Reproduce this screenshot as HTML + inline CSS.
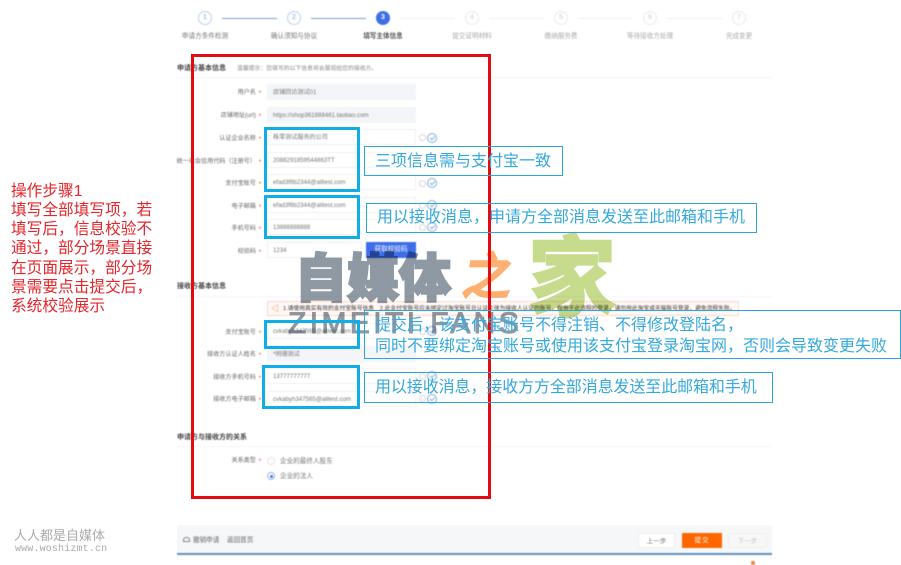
<!DOCTYPE html>
<html lang="zh">
<head>
<meta charset="utf-8">
<title>填写主体信息</title>
<style>
html,body{margin:0;padding:0;background:#fff}
body{position:relative;width:901px;height:564px;overflow:hidden;font-family:"Liberation Sans","Noto Sans CJK SC",sans-serif}
div,span{position:absolute;box-sizing:border-box;white-space:nowrap}
#page{left:0;top:0;width:901px;height:564px;filter:blur(.45px);font-size:6.6px;color:#666}
.c{width:14px;height:14px;border-radius:50%;border:1.3px solid #bcd0f0;top:11px;color:#7f9fdc;text-align:center;line-height:11px;font-size:7px;background:#fff}
.c.off{border-color:#eaeaea;color:#ccc}
.c.on{background:#3f6fe8;border-color:#3f6fe8;color:#fff;font-weight:bold}
.ln{top:18px;height:1px;width:55px;background:#7d9ccc}
.ln.off{background:#efefef}
.st{top:32px;width:80px;text-align:center;color:#777;line-height:9px}
.st.off{color:#aaa}
.st.on{font-weight:bold;color:#555}
.h{left:177px;font-weight:bold;color:#444;line-height:10px;font-size:7px}
.hr{left:177px;width:595px;height:1px;background:#f5f5f5}
.lb{right:640px;color:#666;line-height:9px;font-size:6.1px}
.lb i{font-style:normal;color:#f0603c;margin-left:3px}
.in{left:267px;width:149px;height:16px;border:1px solid #f0f0f0;color:#777;line-height:15px;padding-left:5px;font-size:6.1px;background:#fff}
.in.ro{background:#f3f5f9;border-color:#f3f5f9}
.g{left:419px;width:7px;height:7px;border:1px solid #d8d8d8;border-radius:50%}
.k{left:427px;width:10px;height:10px;border:1px solid #86aedb;border-radius:50%}
.k:after{content:"";position:absolute;left:2px;top:1.5px;width:4px;height:2px;border-left:1px solid #86aedb;border-bottom:1px solid #86aedb;transform:rotate(-45deg)}
.btn{top:533px;height:15px;text-align:center;line-height:15px;font-size:6.5px}
.blue{border:3px solid #10aee6}
.note{border:1px solid #2ba6dc;color:#35a8dc;font-size:16px;line-height:21px;font-weight:400}
.red{left:11px;color:#e4252b;font-size:15.7px;line-height:19.2px}
</style>
</head>
<body>
<div id="page">
  <div class="c" style="left:198px">1</div><div class="ln" style="left:222px"></div>
  <div class="c" style="left:287px">2</div><div class="ln" style="left:311px"></div>
  <div class="c on" style="left:376px">3</div><div class="ln off" style="left:400px"></div>
  <div class="c off" style="left:465px">4</div><div class="ln off" style="left:489px"></div>
  <div class="c off" style="left:554px">5</div><div class="ln off" style="left:578px"></div>
  <div class="c off" style="left:643px">6</div><div class="ln off" style="left:667px"></div>
  <div class="c off" style="left:732px">7</div>
  <div class="st" style="left:165px">申请方条件检测</div>
  <div class="st" style="left:254px">确认须知与协议</div>
  <div class="st on" style="left:343px">填写主体信息</div>
  <div class="st off" style="left:432px">提交证明材料</div>
  <div class="st off" style="left:521px">缴纳服务费</div>
  <div class="st off" style="left:610px">等待接收方处理</div>
  <div class="st off" style="left:699px">完成变更</div>

  <div class="h" style="top:64px">申请方基本信息</div>
  <div style="left:237px;top:65px;color:#888;line-height:9px;font-size:5.85px">温馨提示：您填写的以下信息将会展现给您的接收方。</div>
  <div class="hr" style="top:77px"></div>

  <div class="lb" style="top:88px">用户名<i>•</i></div><div class="in ro" style="top:84px">店铺回访测试01</div>
  <div class="lb" style="top:111px">店铺地址(url)<i>•</i></div><div class="in ro" style="top:107px">https://shop361888461.taobao.com</div>
  <div class="lb" style="top:134px">认证企业名称<i>•</i></div><div class="in" style="top:129px">株零测试服务的公司</div>
  <div class="lb" style="top:157px">统一社会信用代码（注册号）<i>•</i></div><div class="in" style="top:152px">2088291859544863TT</div>
  <div class="lb" style="top:179px">支付宝账号<i>•</i></div><div class="in" style="top:174px">efad3f6b2344@alitest.com</div>
  <div class="lb" style="top:202px">电子邮箱<i>•</i></div><div class="in" style="top:197px">efad3f6b2344@alitest.com</div>
  <div class="lb" style="top:224px">手机号码<i>•</i></div><div class="in" style="top:219px">13888888888</div>
  <div class="lb" style="top:247px">校验码<i>•</i></div><div class="in" style="top:242px;width:95px">1234</div>
  <div style="left:366px;top:242px;width:50px;height:16px;background:#3f6fe8;color:#fff;text-align:center;line-height:16px">获取校验码</div>

  <div class="g" style="top:134px"></div><div class="k" style="top:133px"></div>
  <div class="g" style="top:180px"></div><div class="k" style="top:178px"></div>
  <div class="g" style="top:202px"></div><div class="k" style="top:200px"></div>
  <div class="g" style="top:224px"></div><div class="k" style="top:222px"></div>

  <div class="h" style="top:282px">接收方基本信息</div>
  <div class="hr" style="top:296px"></div>
  <div style="left:267px;top:301px;width:472px;height:15px;background:#fff8f5;border:1px solid #f8d8cc;color:#333;line-height:14px;padding-left:15px;font-size:5.75px">1.请使用真实有效的支付宝账号信息　2.此支付宝账号应未绑定过淘宝账号且认证主体为接收人认证的账号，仅用于此流程的登录，请勿用此淘宝或天猫账号登录，避免流程失败。</div>
  <div style="left:271px;top:304px;color:#ee6a3a;font-size:8px;line-height:9px">◁</div>

  <div class="lb" style="top:328px">支付宝账号<i>•</i></div><div class="in" style="top:323px">cvkabyh347565@alitest.com</div>
  <div class="lb" style="top:350px">接收方认证人姓名<i>•</i></div><div class="in ro" style="top:346px">*明珊测试</div>
  <div class="lb" style="top:373px">接收方手机号码<i>•</i></div><div class="in" style="top:368px">13777777777</div>
  <div class="lb" style="top:395px">接收方电子邮箱<i>•</i></div><div class="in" style="top:391px">cvkabyh347565@alitest.com</div>
  <div class="g" style="top:328px"></div><div class="k" style="top:326px"></div>
  <div class="g" style="top:373px"></div><div class="k" style="top:371px"></div>
  <div class="g" style="top:395px"></div><div class="k" style="top:394px"></div>

  <div class="h" style="top:433px">申请方与接收方的关系</div>
  <div class="hr" style="top:446px"></div>
  <div class="lb" style="top:456px">关系类型<i>•</i></div>
  <div style="left:267px;top:457px;width:8px;height:8px;border:1px solid #e4e4e4;border-radius:50%"></div>
  <div style="left:280px;top:457px;line-height:9px;color:#777">企业的最终人股东</div>
  <div style="left:267px;top:472px;width:8px;height:8px;border:1px solid #9db4e8;border-radius:50%"></div>
  <div style="left:269.5px;top:474.5px;width:3px;height:3px;background:#3f6fe8;border-radius:50%"></div>
  <div style="left:280px;top:472px;line-height:9px;color:#777">企业的法人</div>

  <div style="left:177px;top:525px;width:595px;height:30px;background:#f6f7f8;border-bottom:2px solid #5d90bb"></div>
  <div style="left:183px;top:537px;width:7px;height:5px;border:1px solid #888;border-radius:3px 3px 0 0"></div>
  <div style="left:193px;top:536px;line-height:9px;color:#666">撤销申请</div>
  <div style="left:227px;top:536px;line-height:9px;color:#666">返回首页</div>
  <div class="btn" style="left:638px;width:37px;background:#fff;color:#777;border:1px solid #eee">上一步</div>
  <div class="btn" style="left:682px;width:40px;background:#ff6600;color:#fff;letter-spacing:1px">提交</div>
  <div class="btn" style="left:728px;width:39px;background:#f7f7f7;color:#ccc;border:1px solid #eee">下一步</div>
  <div style="left:751px;top:561px;width:4px;height:4px;background:#f0803c;border-radius:50%"></div>
</div>

<div style="left:295px;top:238px;font:900 52px/74px 'Noto Sans CJK SC',sans-serif;color:#8f99a3;-webkit-text-stroke:2.4px #8f99a3;mix-blend-mode:multiply">自媒体</div>
<div style="left:464px;top:236px;font:700 50px/74px 'Noto Sans CJK SC',sans-serif;color:#ffb071;-webkit-text-stroke:1px #ffb071;mix-blend-mode:multiply;transform:skewX(-10deg)">之</div>
<div style="left:528px;top:216px;font:700 88px/112px 'Noto Sans CJK SC',sans-serif;color:#c6dc8c;-webkit-text-stroke:2.5px #c6dc8c;mix-blend-mode:multiply">家</div>
<div style="left:288px;top:306px;font:400 30px/36px 'Liberation Sans',sans-serif;color:#8f99a3;-webkit-text-stroke:1px #8f99a3;letter-spacing:3.4px;mix-blend-mode:multiply">ZIMEITI FANS</div>

<div style="left:191px;top:54px;width:300px;height:445px;border:3.5px solid #e30b0f"></div>
<div class="blue" style="left:264px;top:127px;width:96px;height:65px"></div>
<div class="blue" style="left:264px;top:195px;width:96px;height:44px"></div>
<div class="blue" style="left:264px;top:320px;width:96px;height:29px"></div>
<div class="blue" style="left:262px;top:365px;width:98px;height:44px"></div>

<div class="note" style="left:364px;top:146px;width:199px;height:30px;padding:4px 0 0 10px">三项信息需与支付宝一致</div>
<div class="note" style="left:366px;top:203px;width:391px;height:30px;padding:3px 0 0 10px">用以接收消息，申请方全部消息发送至此邮箱和手机</div>
<div class="note" style="left:364px;top:310px;width:537px;height:49px;padding:4px 0 0 10px">提交后，该支付宝账号不得注销、不得修改登陆名，<br>同时不要绑定淘宝账号或使用该支付宝登录淘宝网，否则会导致变更失败</div>
<div class="note" style="left:364px;top:372px;width:409px;height:31px;padding:4px 0 0 10px;letter-spacing:-.1px">用以接收消息，接收方方全部消息发送至此邮箱和手机</div>

<div class="red" style="top:182px">操作步骤1</div>
<div class="red" style="top:201px">填写全部填写项，若</div>
<div class="red" style="top:220px">填写后，信息校验不</div>
<div class="red" style="top:239px">通过，部分场景直接</div>
<div class="red" style="top:259px">在页面展示，部分场</div>
<div class="red" style="top:278px">景需要点击提交后，</div>
<div class="red" style="top:297px">系统校验展示</div>

<div style="left:14px;top:527px;font-size:13px;line-height:18px;color:#aaa">人人都是自媒体</div>
<div style="left:15px;top:543px;font:10px/14px 'Liberation Mono',monospace;color:#aaa;letter-spacing:.15px">www.woshizmt.cn</div>
</body>
</html>
